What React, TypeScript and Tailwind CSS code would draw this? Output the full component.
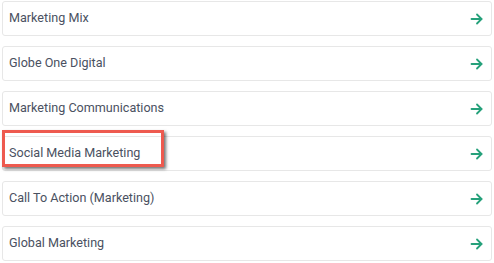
import React from "react";

const items = [
  "Marketing Mix",
  "Globe One Digital",
  "Marketing Communications",
  "Social Media Marketing",
  "Call To Action (Marketing)",
  "Global Marketing",
];

function Arrow() {
  return (
    <svg width="13" height="12" viewBox="0 0 13 12" fill="none" stroke="#26a17b" strokeWidth="1.8" strokeLinecap="round" strokeLinejoin="round">
      <path d="M1.5 6h10" />
      <path d="M7 1.5L11.5 6L7 10.5" />
    </svg>
  );
}

export default function App() {
  return (
    <div className="w-[494px] h-[263px] bg-white px-[2px] pt-[1px] flex flex-col gap-[10px]" style={{ fontFamily: "Roboto, 'Liberation Sans', sans-serif" }}>
      {items.map((t, i) => (
        <div key={t} className="relative h-[35px] shrink-0 border border-[#e7e7e7] rounded-[3px] bg-white flex items-center justify-between pl-[6px] pr-[8px]">
          <span className="text-[12.6px] text-[#4a5161]">{t}</span>
          <Arrow />
          {i === 3 && (
            <div className="absolute left-[-1px] top-[-7px] w-[162px] h-[37px] border-[3px] border-[#ee5a4f] shadow-[2px_2px_3px_rgba(0,0,0,0.55)]" />
          )}
        </div>
      ))}
    </div>
  );
}
